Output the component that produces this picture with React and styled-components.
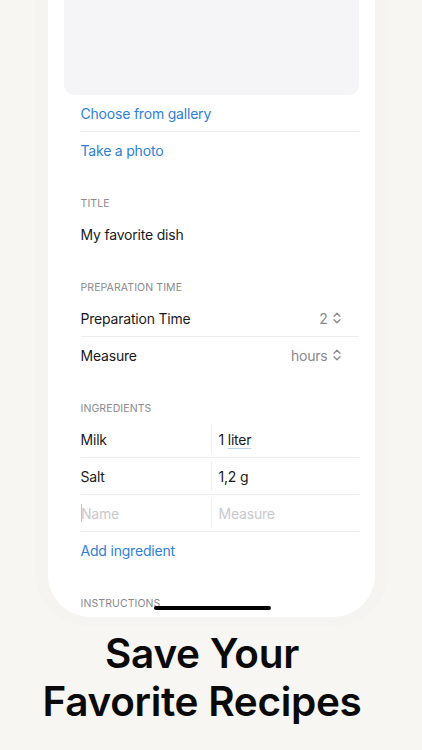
import React from 'react'
import styled, { createGlobalStyle } from 'styled-components'

const GlobalStyle = createGlobalStyle`
  html, body {
    margin: 0;
    padding: 0;
    background: #f8f6f2;
  }
  body {
    font-family: Inter, "Noto Sans", sans-serif;
    -webkit-font-smoothing: antialiased;
  }
`

const Page = styled.div`
  width: 422px;
  height: 750px;
  overflow: hidden;
  display: flex;
  flex-direction: column;
  align-items: center;
`

const Bezel = styled.div`
  width: 353px;
  box-sizing: border-box;
  padding: 0 13px 8px;
  background: #f5f4f0;
  border-radius: 0 0 52px 52px;
`

const Screen = styled.div`
  position: relative;
  height: 617px;
  overflow: hidden;
  background: #fff;
  border-radius: 0 0 42px 42px;
`

const Preview = styled.div`
  margin: 0 16px;
  height: 95px;
  background: #f5f5f7;
  border-radius: 0 0 10px 10px;
`

const Form = styled.div`
  padding: 0 16px 0 33px;
`

const Section = styled.div`
  margin-top: ${p => (p.first ? 0 : 29)}px;
`

const Label = styled.div`
  font-size: 10.5px;
  line-height: 14px;
  letter-spacing: 0.1px;
  color: #8a8a8e;
  text-transform: uppercase;
  margin-bottom: 5px;
`

const Row = styled.div`
  display: flex;
  align-items: center;
  height: 36px;
  border-bottom: ${p => (p.last ? 'none' : '1px solid #ececef')};
  font-size: 14px;
  letter-spacing: -0.2px;
  color: ${p => (p.link ? '#2f80d8' : '#1a1a1c')};
`

const Value = styled.span`
  margin-left: auto;
  margin-right: 18px;
  display: flex;
  align-items: center;
  gap: 5px;
  color: #8a8a8e;
`

const Cell = styled.div`
  display: flex;
  align-items: center;
  height: 100%;
  color: ${p => (p.placeholder ? '#c9c9cd' : '#1a1a1c')};
  ${p => (p.left ? 'width: 131px; border-right: 1px solid #f0f0f2; box-sizing: border-box; height: 30px;' : 'padding-left: 7px;')}
`

const Caret = styled.span`
  width: 1.5px;
  height: 18px;
  background: #a9cdf0;
  margin-right: -1px;
`

const Spelled = styled.span`
  text-decoration: underline;
  text-decoration-color: #b7d5f2;
  text-underline-offset: 3px;
`

const HomeBar = styled.div`
  position: absolute;
  left: 106px;
  bottom: 7px;
  width: 117px;
  height: 4px;
  border-radius: 2px;
  background: #000;
`

const Headline = styled.h1`
  margin: 5px 0 0;
  padding-right: 18px;
  font-size: 40.5px;
  line-height: 48px;
  font-weight: 600;
  letter-spacing: -0.3px;
  text-align: center;
  color: #0a0a0a;
`

const UpDown = () => (
  <svg width="8" height="12" viewBox="0 0 8 12" fill="none" stroke="#8a8a8e" strokeWidth="1.3" strokeLinecap="round" strokeLinejoin="round">
    <path d="M1 4.2 L4 1.2 L7 4.2" />
    <path d="M1 7.8 L4 10.8 L7 7.8" />
  </svg>
)

export default function App() {
  return (
    <Page>
      <GlobalStyle />
      <Bezel>
        <Screen>
          <Preview />
          <Form>
            <Section first>
              <Row link>Choose from gallery</Row>
              <Row link last>Take a photo</Row>
            </Section>
            <Section>
              <Label>Title</Label>
              <Row last>My favorite dish</Row>
            </Section>
            <Section>
              <Label>Preparation Time</Label>
              <Row>
                Preparation Time
                <Value>2 <UpDown /></Value>
              </Row>
              <Row last>
                Measure
                <Value>hours <UpDown /></Value>
              </Row>
            </Section>
            <Section>
              <Label>Ingredients</Label>
              <Row>
                <Cell left>Milk</Cell>
                <Cell>1&nbsp;<Spelled>liter</Spelled></Cell>
              </Row>
              <Row>
                <Cell left>Salt</Cell>
                <Cell>1,2 g</Cell>
              </Row>
              <Row>
                <Cell left placeholder><Caret />Name</Cell>
                <Cell placeholder>Measure</Cell>
              </Row>
              <Row link last>Add ingredient</Row>
            </Section>
            <Section>
              <Label>Instructions</Label>
            </Section>
          </Form>
          <HomeBar />
        </Screen>
      </Bezel>
      <Headline>
        Save Your
        <br />
        Favorite Recipes
      </Headline>
    </Page>
  )
}
